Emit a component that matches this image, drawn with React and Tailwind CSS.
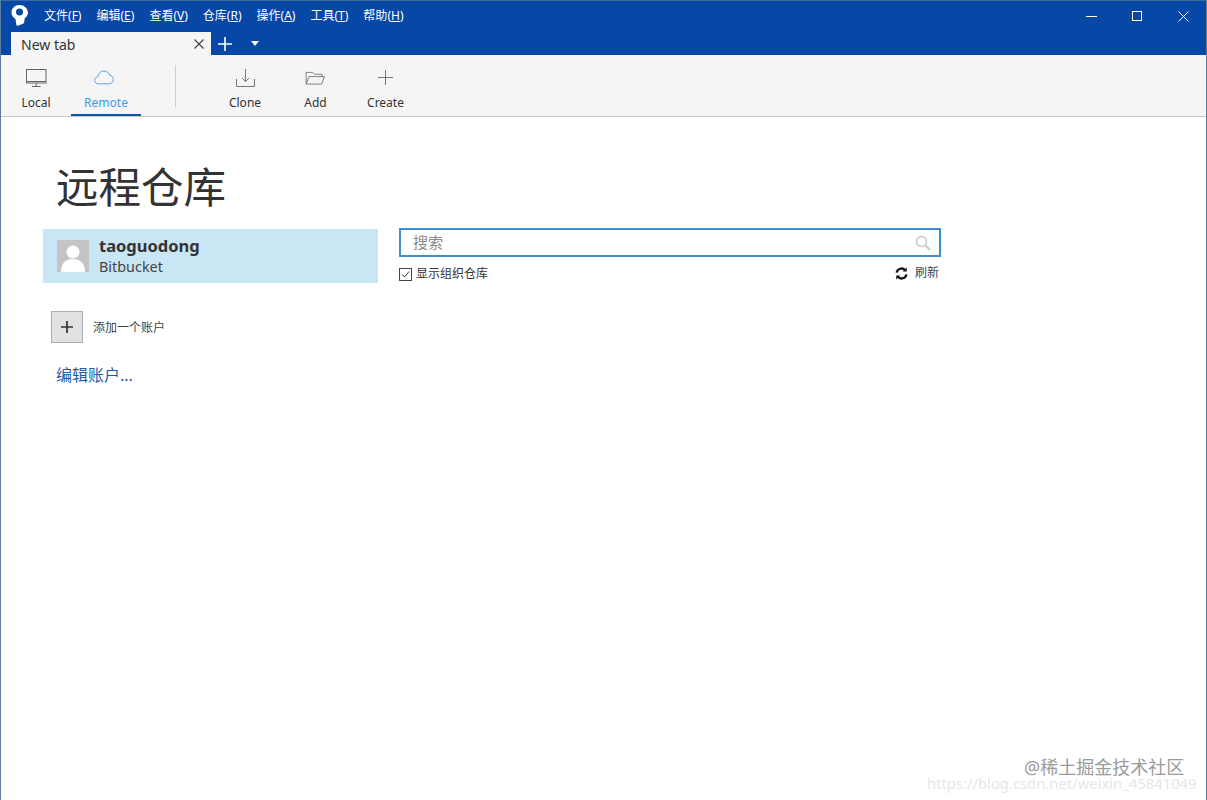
import React from "react";

const font = "font-['Noto_Sans','Noto_Sans_CJK_SC',sans-serif]";

const menus = [
  ["文件", "F"],
  ["编辑", "E"],
  ["查看", "V"],
  ["仓库", "R"],
  ["操作", "A"],
  ["工具", "T"],
  ["帮助", "H"],
];

function Logo() {
  return (
    <svg width="17" height="21" viewBox="0 0 17 21" className="shrink-0 -mt-[2px]">
      <path d="M8.500 0C3.900 0 .5 3.300.5 7.600c0 2.900 1.500 5.200 4 6.400l.8 5.800c.1.700.8 1.100 1.500.9l5.300-2c.7-.3 1-.8 1.100-1.400l.4-3.800c2.100-1.300 3.400-3.500 3.400-5.900C16.500 3.300 13.100 0 8.500 0z" fill="#fff" />
      <circle cx="8.500" cy="7" r="3.500" fill="#0747a6" />
    </svg>
  );
}

function ToolItem({ label, active, children, w }) {
  return (
    <div className={`flex flex-col items-center h-full pt-[12px] ${w} ${active ? "border-b-2 border-[#0f56a8]" : ""}`}>
      <div className="h-[21px] flex items-center justify-center">{children}</div>
      <span className={`mt-[6px] text-[12px] leading-[17px] ${active ? "text-[#3f9bf0]" : "text-[#333]"}`}>{label}</span>
    </div>
  );
}

export default function App() {
  return (
    <div className={`${font} relative w-[1207px] h-[800px] overflow-hidden bg-white border-x border-[#5b7d9f] flex flex-col`}>
      <header className="bg-[#0747a6] h-[55px] shrink-0 flex flex-col border-t border-[#3d6a9e]">
        <div className="h-[31px] flex items-center pl-[10px]">
          <Logo />
          <nav className="flex ml-[16px] -mt-[2px] gap-[15px] text-[12px] text-white">
            {menus.map(([n, k]) => (
              <span key={k} className="leading-[16px] whitespace-nowrap">
                {n}(<span className="underline">{k}</span>)
              </span>
            ))}
          </nav>
          <div className="ml-auto flex items-center text-white -mt-px">
            <div className="w-[46px] flex justify-center">
              <svg width="11" height="11" viewBox="0 0 11 11"><path d="M0 5.500H11" stroke="#fff" /></svg>
            </div>
            <div className="w-[46px] flex justify-center">
              <svg width="10" height="10" viewBox="0 0 10 10"><rect x=".5" y=".5" width="9" height="9" fill="none" stroke="#fff" /></svg>
            </div>
            <div className="w-[46px] flex justify-center">
              <svg width="11" height="11" viewBox="0 0 11 11"><path d="M.5.5l10 10M10.500.5l-10 10" stroke="#fff" /></svg>
            </div>
          </div>
        </div>
        <div className="h-[23px] flex items-stretch pl-[10px]">
          <div className="w-[200px] bg-[#f5f5f5] flex items-center justify-between pl-[10px] pr-[7px] pt-px text-[14px] text-[#333]">
            <span>New tab</span>
            <svg width="10" height="10" viewBox="0 0 10 10"><path d="M.5.5l9 9M9.500.5l-9 9" stroke="#444" strokeWidth="1.200" /></svg>
          </div>
          <div className="ml-[7px] flex items-center">
            <svg width="14" height="14" viewBox="0 0 14 14"><path d="M7 0v14M0 7h14" stroke="#fff" strokeWidth="1.600" /></svg>
          </div>
          <div className="ml-[19px] flex items-center">
            <svg width="8" height="5" viewBox="0 0 8 5"><path d="M0 0h8L4 5z" fill="#fff" /></svg>
          </div>
        </div>
      </header>

      <div className="h-[62px] shrink-0 bg-[#f5f5f5] border-b border-[#c8c8c8] flex items-stretch">
        <ToolItem label="Local" w="w-[70px]">
          <svg width="21" height="18" viewBox="0 0 21 18" fill="none" stroke="#666">
            <rect x=".5" y=".5" width="19.500" height="13.500" />
            <path d="M.5 12.500H20M10.200 14v3M6 17.500h8.500" />
          </svg>
        </ToolItem>
        <ToolItem label="Remote" active w="w-[70px]">
          <svg width="20" height="15" viewBox="0 0 22 16" fill="none" stroke="#4a9bea" strokeWidth="1" className="-translate-x-[2px]">
            <path d="M5 15c-2.500 0-4.300-1.700-4.300-3.900 0-2 1.500-3.500 3.400-3.800C4.600 3.400 7.400.8 10.900.8c3 0 5.300 1.800 6 4.400 2.500.3 4.400 2.500 4.400 5 0 2.700-2.100 4.800-4.800 4.800z" />
          </svg>
        </ToolItem>
        <div className="w-px h-[42px] bg-[#cfcfcf] mt-[10px] ml-[34px] mr-[34px]" />
        <ToolItem label="Clone" w="w-[70px]">
          <svg width="19" height="18" viewBox="0 0 19 18" fill="none" stroke="#777">
            <path d="M.5 10v7.500h18V10M9.500 0v12.500M6 9l3.500 3.500L13 9" />
          </svg>
        </ToolItem>
        <ToolItem label="Add" w="w-[71px]">
          <svg width="21" height="14" viewBox="0 0 21 15" fill="none" stroke="#777">
            <path d="M.5 14V1.500h7l2 2h8V6M.5 14l3-8h16.500l-3 8z" />
          </svg>
        </ToolItem>
        <ToolItem label="Create" w="w-[69px]">
          <svg width="15" height="15" viewBox="0 0 15 15" fill="none" stroke="#777"><path d="M7.500 0v15M0 7.500h15" /></svg>
        </ToolItem>
      </div>

      <main className="flex-1 pl-[42px] flex flex-col">
        <h1 className="ml-[13px] mt-[42px] text-[42.5px] leading-[56px] font-normal text-[#333]">远程仓库</h1>
        <div className="mt-[14px] flex items-start">
          <div className="w-[335px]">
            <div className="h-[54px] bg-[#c9e6f4] flex items-center pl-[14px]">
              <div className="w-[32px] h-[32px] bg-[#c4c4c6] overflow-hidden shrink-0">
                <svg width="32" height="32" viewBox="0 0 32 32"><circle cx="16" cy="12" r="6.500" fill="#fff" /><path d="M4 32c0-8 4-13 12-13s12 5 12 13z" fill="#fff" /></svg>
              </div>
              <div className="ml-[10px] flex flex-col">
                <span className="text-[16.500px] leading-[21px] font-bold text-[#333] -translate-y-px">taoguodong</span>
                <span className="text-[14.400px] leading-[20px] text-[#444]">Bitbucket</span>
              </div>
            </div>
            <div className="mt-[28px] ml-[8px] flex items-center">
              <div className="w-[32px] h-[32px] bg-[#e1e1e1] border border-[#adadad] flex items-center justify-center">
                <svg width="12" height="12" viewBox="0 0 12 12"><path d="M6 0v12M0 6h12" stroke="#333" strokeWidth="1.700" /></svg>
              </div>
              <span className="ml-[10px] pt-[2px] text-[12px] text-[#444]">添加一个账户</span>
            </div>
            <a className="block mt-[22px] ml-[13px] text-[16px] leading-[20px] text-[#1d5ba8]">编辑账户...</a>
          </div>
          <div className="ml-[21px] w-[542px] -mt-px">
            <div className="h-[29px] border-2 border-[#3e8ed0] bg-white flex items-center justify-between pl-[12px] pr-[8px]">
              <span className="text-[15px] text-[#8a8a8a]">搜索</span>
              <svg width="16" height="16" viewBox="0 0 16 16" fill="none" stroke="#c9c9c9" strokeWidth="1.500">
                <circle cx="6.500" cy="6.500" r="5" />
                <path d="M10.500 10.500l4.500 4.500" strokeWidth="2.200" />
              </svg>
            </div>
            <div className="mt-[9px] flex items-center justify-between">
              <div className="flex items-center">
                <div className="w-[13px] h-[13px] border border-[#444] flex items-center justify-center">
                  <svg width="9" height="9" viewBox="0 0 9 9" fill="none" stroke="#333"><path d="M1 4.500l2.500 2.500L8 1.500" /></svg>
                </div>
                <span className="ml-[4px] text-[12px] leading-[16px] text-[#333]">显示组织仓库</span>
              </div>
              <div className="flex items-center mr-[2px] -mt-[2px]">
                <svg width="13" height="13" viewBox="0 0 16 16" fill="none" stroke="#111" strokeWidth="2.800">
                  <path d="M2 7a6 6 0 0 1 10.500-3M14 9a6 6 0 0 1-10.500 3" />
                  <path d="M14.500 .5v5h-5zM1.500 15.500v-5h5z" fill="#111" stroke="none" />
                </svg>
                <span className="ml-[7px] text-[12px] leading-[16px] text-[#444]">刷新</span>
              </div>
            </div>
          </div>
        </div>
      </main>

      <div className="absolute left-[1023px] top-[757px] text-[18px] leading-[20px] h-[20px] text-[#9b9b9b] whitespace-nowrap">@稀土掘金技术社区</div>
      <div className="absolute left-[926px] top-[774px] text-[14.800px] leading-[18px] text-[#e6e6e6] whitespace-nowrap">https://blog.csdn.net/weixin_45841049</div>
    </div>
  );
}
